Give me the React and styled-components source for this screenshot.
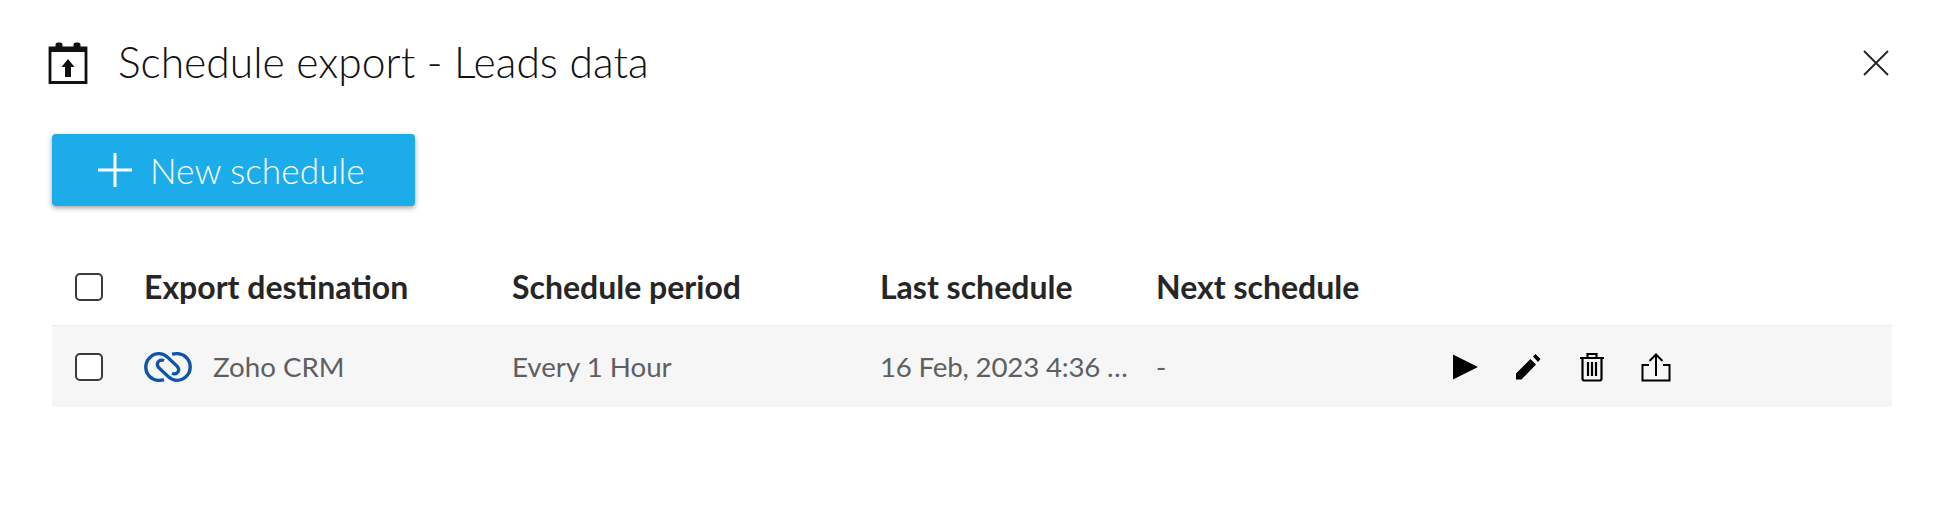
import React from "react";
import styled, { createGlobalStyle } from "styled-components";

const Global = createGlobalStyle`
  html, body { margin: 0; padding: 0; background: #fff; }
  body { font-family: Lato, "Open Sans", sans-serif; }
`;
const Page = styled.div`
  width: 1946px;
  height: 532px;
  box-sizing: border-box;
  padding: 42px 54px 0 52px;
  background: #fff;
  overflow: hidden;
`;
const TitleBar = styled.header`
  display: flex;
  align-items: center;
  height: 41px;
`;
const TitleIcon = styled.svg`
  width: 40px;
  height: 42px;
  margin-left: -4px;
  flex: none;
`;
const Title = styled.h1`
  margin: -3px 0 0 30px;
  flex: 1;
  font-size: 42.6px;
  font-weight: 300;
  color: #111;
  line-height: 41px;
`;
const CloseIcon = styled.svg`
  width: 26px;
  height: 26px;
  margin-right: 3px;
  flex: none;
`;
const PrimaryButton = styled.button`
  display: flex;
  align-items: center;
  width: 363px;
  height: 72px;
  margin-top: 51px;
  padding: 0 0 0 46px;
  border: 0;
  border-radius: 4px;
  background: #1cace9;
  box-shadow: 0 2px 5px rgba(60, 50, 40, 0.45);
  color: #fff;
  font-family: inherit;
  font-size: 35.3px;
  font-weight: 300;
`;
const PlusIcon = styled.svg`
  width: 34px;
  height: 34px;
  margin-right: 18px;
  flex: none;
`;
const Row = styled.div`
  display: grid;
  grid-template-columns: 92px 368px 368px 276px 296px 1fr;
  align-items: center;
  height: ${(p) => (p.$head ? "77px" : "82px")};
  margin-top: ${(p) => (p.$head ? "42px" : "0")};
  background: ${(p) => (p.$head ? "transparent" : "#f6f6f6")};
  border-top: ${(p) => (p.$head ? "0" : "1px dotted #e6e6e6")};
  box-sizing: border-box;
`;
const CheckCell = styled.div`
  padding-left: 23px;
  display: flex;
`;
const Check = styled.span`
  width: 28px;
  height: 28px;
  box-sizing: border-box;
  border: 2px solid #3a3a3a;
  border-radius: 5px;
  background: #fff;
  display: block;
`;
const HeadCell = styled.div`
  font-size: 32px;
  font-weight: 700;
  color: #262626;
  white-space: nowrap;
`;
const Cell = styled.div`
  display: flex;
  align-items: center;
  font-size: 27.7px;
  font-weight: 400;
  color: #5f5f5f;
  white-space: nowrap;
  min-width: 0;
  letter-spacing: ${(p) => (p.$tight ? "-0.2px" : "0")};
`;
const Logo = styled.svg`
  width: 48px;
  height: 30px;
  margin-right: 21px;
  flex: none;
`;
const Actions = styled.div`
  display: flex;
  align-items: center;
  gap: 33px;
`;
const ActionIcon = styled.svg`
  width: 30px;
  height: 30px;
  flex: none;
  color: #000;
`;

export default function App() {
  return (
    <Page>
      <Global />
      <TitleBar>
        <TitleIcon viewBox="0 0 40 42">
          <path d="M2 6 H38 V40.5 H2 Z" fill="none" stroke="#111" strokeWidth="2.8" />
          <rect x="2" y="6" width="36" height="4" fill="#111" />
          <rect x="7.5" y="0.5" width="7" height="6" rx="2.5" fill="#111" />
          <rect x="25.5" y="0.5" width="7" height="6" rx="2.5" fill="#111" />
          <path d="M20 17 L26.5 25 H23 V35 H17 V25 H13.5 Z" fill="#111" />
        </TitleIcon>
        <Title>Schedule export - Leads data</Title>
        <CloseIcon viewBox="0 0 26 26">
          <path d="M1 1 L25 25 M25 1 L1 25" stroke="#222" strokeWidth="1.8" fill="none" />
        </CloseIcon>
      </TitleBar>
      <PrimaryButton>
        <PlusIcon viewBox="0 0 34 34">
          <path d="M17 0 V34 M0 17 H34" stroke="#fff" strokeWidth="3" fill="none" />
        </PlusIcon>
        New schedule
      </PrimaryButton>
      <Row $head>
        <CheckCell><Check /></CheckCell>
        <HeadCell>Export destination</HeadCell>
        <HeadCell>Schedule period</HeadCell>
        <HeadCell>Last schedule</HeadCell>
        <HeadCell>Next schedule</HeadCell>
      </Row>
      <Row>
        <CheckCell><Check /></CheckCell>
        <Cell>
          <Logo viewBox="0 0 48 32" preserveAspectRatio="none" fill="none" stroke="#0d55a8" strokeWidth="3.4" strokeLinecap="butt">
            <path d="M20 29.8 C18 30.2 16 30.3 14 30.2 C7 29.6 1.8 23.6 1.8 16 C1.8 8 8 1.8 15 1.8 C19 1.8 21.5 3.5 24 6 L33 15 C35.5 17.5 35 21 33 22.5 C31.5 23.7 29.5 23.5 28 22.8" />
            <path d="M28 2.2 C30 1.8 32 1.7 34 1.8 C41 2.4 46.2 8.4 46.2 16 C46.2 24 40 30.2 33 30.2 C29 30.2 26.5 28.5 24 26 L15 17 C12.5 14.5 13 11 15 9.5 C16.5 8.3 18.5 8.5 20 9.2" />
          </Logo>
          Zoho CRM
        </Cell>
        <Cell>Every 1 Hour</Cell>
        <Cell $tight>16 Feb, 2023 4:36 …</Cell>
        <Cell>-</Cell>
        <Actions>
          <ActionIcon viewBox="0 0 30 30">
            <path d="M1 2.5 L26 15 L1 27.5 Z" fill="currentColor" />
          </ActionIcon>
          <ActionIcon viewBox="0 0 30 30">
            <path d="M1 27.5 V21.5 L15.5 7 L21 12.5 L6.5 27.5 Z M18 4.5 L20.5 2 L25.5 7 L23 10 Z" fill="currentColor" />
          </ActionIcon>
          <ActionIcon viewBox="0 0 30 30" fill="none" stroke="currentColor" strokeWidth="2.2">
            <path d="M2 6 H26 M9.5 6 V2 H18.5 V6" />
            <path d="M4.5 6 V26.5 A2 2 0 0 0 6.5 28.5 H21.5 A2 2 0 0 0 23.5 26.5 V6" />
            <path d="M10 10 V24 M14 10 V24 M18 10 V24" />
          </ActionIcon>
          <ActionIcon viewBox="0 0 30 30" fill="none" stroke="currentColor" strokeWidth="2">
            <path d="M8 13 H1.5 V28.5 H28.5 V13 H22" />
            <path d="M15 24 V2.5 M8.5 9 L15 2.5 L21.5 9" />
          </ActionIcon>
        </Actions>
      </Row>
    </Page>
  );
}
